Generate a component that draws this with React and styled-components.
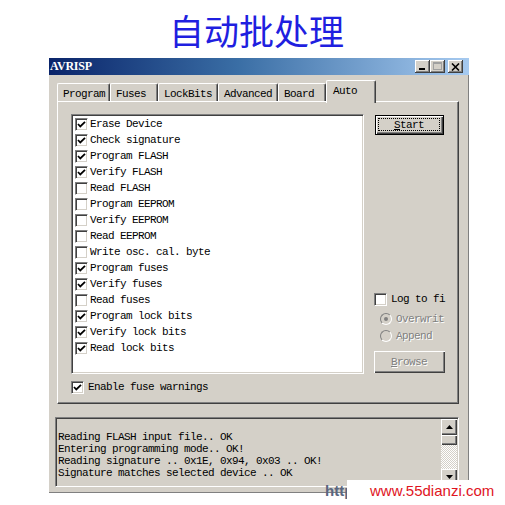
import React from 'react'
import styled, { createGlobalStyle } from 'styled-components'

const mono = `"Liberation Mono", "DejaVu Sans Mono", monospace`
const face = '#d4d0c8'

const GlobalStyle = createGlobalStyle`
  html, body {
    margin: 0;
    padding: 0;
    background: #fff;
  }
  body {
    width: 505px;
    height: 505px;
    overflow: hidden;
  }
`

const Page = styled.div`
  position: relative;
  width: 505px;
  height: 505px;
  background: #fff;
`

const Heading = styled.h1`
  margin: 0;
  height: 58px;
  padding-left: 8px;
  box-sizing: border-box;
  display: flex;
  align-items: center;
  justify-content: center;
  font-family: 'Noto Sans CJK SC', sans-serif;
  font-size: 35px;
  font-weight: 400;
  color: #1f1fe0;
`

const Window = styled.div`
  margin-left: 49px;
  width: 420px;
  height: 435px;
  background: ${face};
  box-shadow: inset -1px 0 #808080, inset 0 -1px #808080;
  display: flex;
  flex-direction: column;
`

const TitleBar = styled.div`
  height: 17px;
  display: flex;
  align-items: center;
  padding: 0 6px 0 1px;
  background: linear-gradient(90deg, #0a246a 0%, #3a6ea5 45%, #a6caf0 100%);
`

const TitleText = styled.div`
  flex: 1;
  color: #fff;
  font-family: 'Liberation Serif', serif;
  font-weight: bold;
  font-size: 12px;
  letter-spacing: -0.2px;
`

const WinButton = styled.div`
  width: 15px;
  height: 13px;
  margin-left: ${p => p.$gap}px;
  background: ${face};
  box-shadow: inset -1px -1px #404040, inset 1px 1px #fff, inset -2px -2px #808080;
  display: flex;
  align-items: center;
  justify-content: center;
`

const Body = styled.div`
  display: flex;
  flex-direction: column;
  padding-left: 8px;
`

const TabStrip = styled.div`
  display: flex;
  align-items: flex-end;
  height: 21px;
  margin-top: 5px;
  position: relative;
  z-index: 1;
`

const Tab = styled.div`
  width: ${p => p.$w}px;
  height: ${p => (p.$active ? 23 : 18)}px;
  margin-bottom: ${p => (p.$active ? -2 : 0)}px;
  box-sizing: border-box;
  padding: ${p => (p.$active ? '4px 0 0 6px' : '4px 0 0 5px')};
  background: ${face};
  border-top: 1px solid #fff;
  border-left: 1px solid #fff;
  border-right: 1px solid #404040;
  box-shadow: inset -1px 0 #808080;
  border-radius: 2px 2px 0 0;
  font-family: ${mono};
  font-size: 11px;
  letter-spacing: -0.6px;
  line-height: 12px;
  color: #000;
`

const Panel = styled.div`
  width: 402px;
  height: 303px;
  box-sizing: border-box;
  padding: 12px 0 0 13px;
  border-top: 1px solid #fff;
  border-left: 1px solid #fff;
  border-right: 1px solid #404040;
  border-bottom: 1px solid #404040;
  box-shadow: inset -1px -1px #808080;
  display: flex;
  flex-direction: column;
`

const TopRow = styled.div`
  display: flex;
`

const ListBox = styled.div`
  width: 293px;
  height: 260px;
  box-sizing: border-box;
  padding: 1px 0 0 3px;
  background: #fff;
  border: 1px solid;
  border-color: #808080 #fff #fff #808080;
  box-shadow: inset 1px 1px #404040, inset -1px -1px ${face};
`

const Row = styled.div`
  height: 16px;
  display: flex;
  align-items: center;
  gap: ${p => p.$gap ?? 2}px;
  margin: ${p => p.$m || '0'};
  font-family: ${mono};
  font-size: 11px;
  letter-spacing: -0.6px;
  color: ${p => (p.$disabled ? '#808080' : '#000')};
  text-shadow: ${p => (p.$disabled ? '1px 1px #fff' : 'none')};
  white-space: pre;
`

const Box = styled.div`
  width: 13px;
  height: 13px;
  box-sizing: border-box;
  flex: none;
  background: #fff;
  border: 1px solid;
  border-color: #808080 #fff #fff #808080;
  box-shadow: inset 1px 1px #404040, inset -1px -1px ${face};
  display: flex;
  align-items: center;
  justify-content: center;
  text-shadow: none;
`

const Radio = styled.div`
  width: 12px;
  height: 12px;
  box-sizing: border-box;
  flex: none;
  border-radius: 50%;
  border: 1px solid;
  border-color: #808080 #fff #fff #808080;
  background: ${face};
  display: flex;
  align-items: center;
  justify-content: center;
  &::after {
    content: '';
    width: 4px;
    height: 4px;
    border-radius: 50%;
    background: ${p => (p.$on ? '#808080' : 'transparent')};
  }
`

const SideColumn = styled.div`
  margin-left: 10px;
  display: flex;
  flex-direction: column;
`

const Button = styled.div`
  width: ${p => p.$w}px;
  height: ${p => p.$h}px;
  margin: ${p => p.$m};
  box-sizing: border-box;
  display: flex;
  background: ${face};
  border: ${p => (p.$default ? '1px solid #000' : 'none')};
  box-shadow: inset 1px 1px #fff, inset -1px -1px #404040, inset -2px -2px #808080;
  font-family: ${mono};
  font-size: 11px;
  letter-spacing: -0.6px;
  color: ${p => (p.$disabled ? '#808080' : '#000')};
  text-shadow: ${p => (p.$disabled ? '1px 1px #fff' : 'none')};
`

const FocusRing = styled.div`
  flex: 1;
  margin: 2px 3px 3px 2px;
  border: 1px dotted ${p => (p.$show ? '#000' : 'transparent')};
  display: flex;
  align-items: center;
  justify-content: center;
  u {
    text-underline-offset: 1px;
  }
`

const LogBox = styled.div`
  margin: 13px 0 0 6px;
  width: 404px;
  height: 70px;
  box-sizing: border-box;
  display: flex;
  border: 1px solid;
  border-color: #808080 #fff #fff #808080;
  box-shadow: inset 1px 1px #404040, inset -1px -1px ${face};
  padding: 1px;
`

const LogText = styled.div`
  flex: 1;
  padding: 12px 0 0 1px;
  font-family: ${mono};
  font-size: 11px;
  letter-spacing: -0.6px;
  line-height: 12px;
  white-space: pre;
  color: #000;
`

const ScrollBar = styled.div`
  width: 16px;
  display: flex;
  flex-direction: column;
`

const ScrollButton = styled.div`
  height: ${p => p.$h}px;
  background: ${face};
  box-shadow: inset 1px 1px #fff, inset -1px -1px #404040, inset -2px -2px #808080;
  display: flex;
  align-items: center;
  justify-content: center;
`

const Track = styled.div`
  flex: 1;
  background-image: repeating-conic-gradient(#fff 0 25%, ${face} 0 50%);
  background-size: 2px 2px;
`

const UrlGhost = styled.div`
  position: absolute;
  left: 325px;
  top: 482px;
  font-family: 'Liberation Sans', sans-serif;
  font-weight: bold;
  font-size: 15px;
  color: #5a6680;
`

const Watermark = styled.div`
  position: absolute;
  left: 347px;
  top: 480px;
  width: 158px;
  height: 25px;
  box-sizing: border-box;
  padding: 2px 0 0 23px;
  background: #fff;
  font-family: 'Liberation Sans', sans-serif;
  font-size: 15px;
  color: #e0141e;
`

const Check = () => (
  <svg width="9" height="9" viewBox="0 0 9 9">
    <polyline points="1,4 3.3,6.5 8,1.8" fill="none" stroke="#000" strokeWidth="1.8" />
  </svg>
)

const CheckBox = ({ on }) => <Box>{on && <Check />}</Box>

const Arrow = ({ down }) => (
  <svg width="7" height="4" viewBox="0 0 7 4">
    <polygon points={down ? '0,0 7,0 3.5,4' : '0,4 7,4 3.5,0'} fill="#000" />
  </svg>
)

const options = [
  ['Erase Device', true],
  ['Check signature', true],
  ['Program FLASH', true],
  ['Verify FLASH', true],
  ['Read FLASH', false],
  ['Program EEPROM', false],
  ['Verify EEPROM', false],
  ['Read EEPROM', false],
  ['Write osc. cal. byte', false],
  ['Program fuses', true],
  ['Verify fuses', true],
  ['Read fuses', false],
  ['Program lock bits', true],
  ['Verify lock bits', true],
  ['Read lock bits', true],
]

const tabs = [
  ['Program', 53],
  ['Fuses', 48],
  ['LockBits', 60],
  ['Advanced', 60],
  ['Board', 48],
  ['Auto', 50],
]

const log = [
  'Reading FLASH input file.. OK',
  'Entering programming mode.. OK!',
  'Reading signature .. 0x1E, 0x94, 0x03 .. OK!',
  'Signature matches selected device .. OK',
]

export default function App() {
  return (
    <Page>
      <GlobalStyle />
      <Heading>自动批处理</Heading>
      <Window>
        <TitleBar>
          <TitleText>AVRISP</TitleText>
          <WinButton $gap={0}>
            <svg width="9" height="9" viewBox="0 0 9 9">
              <rect x="1" y="6" width="6" height="2" fill="#000" />
            </svg>
          </WinButton>
          <WinButton $gap={0}>
            <svg width="9" height="9" viewBox="0 0 9 9">
              <rect x="0.5" y="0.5" width="8" height="7" fill="none" stroke="#a0a0a0" />
              <rect x="0.5" y="0.5" width="8" height="1.5" fill="#a0a0a0" />
            </svg>
          </WinButton>
          <WinButton $gap={3}>
            <svg width="9" height="8" viewBox="0 0 9 8">
              <path d="M1 0.5 L8 7.5 M8 0.5 L1 7.5" stroke="#000" strokeWidth="1.6" />
            </svg>
          </WinButton>
        </TitleBar>
        <Body>
          <TabStrip>
            {tabs.map(([name, w]) => (
              <Tab key={name} $w={w} $active={name === 'Auto'}>
                {name}
              </Tab>
            ))}
          </TabStrip>
          <Panel>
            <TopRow>
              <ListBox>
                {options.map(([label, on]) => (
                  <Row key={label}>
                    <CheckBox on={on} />
                    {label}
                  </Row>
                ))}
              </ListBox>
              <SideColumn>
                <Button $w={69} $h={20} $m="1px 0 0 1px" $default>
                  <FocusRing $show>
                    <span>
                      <u>S</u>tart
                    </span>
                  </FocusRing>
                </Button>
                <Row $m="156px 0 0 0" $gap={4}>
                  <CheckBox on={false} />
                  Log to fi
                </Row>
                <Row $m="4px 0 0 6px" $gap={4} $disabled>
                  <Radio $on />
                  Overwrit
                </Row>
                <Row $m="1px 0 0 6px" $gap={4} $disabled>
                  <Radio />
                  Append
                </Row>
                <Button $w={71} $h={22} $m="7px 0 0 0" $disabled>
                  <FocusRing>
                    <span>
                      <u>B</u>rowse
                    </span>
                  </FocusRing>
                </Button>
              </SideColumn>
            </TopRow>
            <Row $m="5px 0 0 0" $gap={4}>
              <CheckBox on />
              Enable fuse warnings
            </Row>
          </Panel>
        </Body>
        <LogBox>
          <LogText>{log.join('\n')}</LogText>
          <ScrollBar>
            <ScrollButton $h={16}>
              <Arrow />
            </ScrollButton>
            <ScrollButton $h={10} />
            <Track />
            <ScrollButton $h={16}>
              <Arrow down />
            </ScrollButton>
          </ScrollBar>
        </LogBox>
      </Window>
      <UrlGhost>http://</UrlGhost>
      <Watermark>www.55dianzi.com</Watermark>
    </Page>
  )
}
